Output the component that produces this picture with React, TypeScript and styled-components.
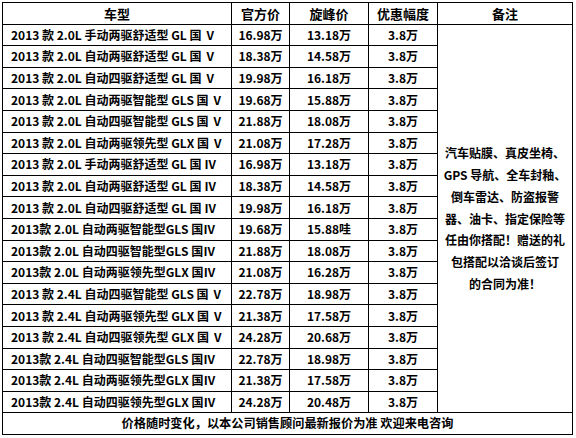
import styled, { createGlobalStyle } from "styled-components";

type CarRow = {
  model: string;
  official: string;
  sale: string;
  discount: string;
};

const rows: CarRow[] = [
  { model: "2013 款 2.0L 手动两驱舒适型 GL 国 Ⅴ", official: "16.98万", sale: "13.18万", discount: "3.8万" },
  { model: "2013 款 2.0L 自动两驱舒适型 GL 国 Ⅴ", official: "18.38万", sale: "14.58万", discount: "3.8万" },
  { model: "2013 款 2.0L 自动四驱舒适型 GL 国 Ⅴ", official: "19.98万", sale: "16.18万", discount: "3.8万" },
  { model: "2013 款 2.0L 自动两驱智能型 GLS 国 Ⅴ", official: "19.68万", sale: "15.88万", discount: "3.8万" },
  { model: "2013 款 2.0L 自动四驱智能型 GLS 国 Ⅴ", official: "21.88万", sale: "18.08万", discount: "3.8万" },
  { model: "2013 款 2.0L 自动两驱领先型 GLX 国 Ⅴ", official: "21.08万", sale: "17.28万", discount: "3.8万" },
  { model: "2013 款 2.0L 手动两驱舒适型 GL 国 Ⅳ", official: "16.98万", sale: "13.18万", discount: "3.8万" },
  { model: "2013 款 2.0L 自动两驱舒适型 GL 国 Ⅳ", official: "18.38万", sale: "14.58万", discount: "3.8万" },
  { model: "2013 款 2.0L 自动四驱舒适型 GL 国 Ⅳ", official: "19.98万", sale: "16.18万", discount: "3.8万" },
  { model: "2013款 2.0L 自动两驱智能型GLS 国Ⅳ", official: "19.68万", sale: "15.88哇", discount: "3.8万" },
  { model: "2013款 2.0L 自动四驱智能型GLS 国Ⅳ", official: "21.88万", sale: "18.08万", discount: "3.8万" },
  { model: "2013款 2.0L 自动两驱领先型GLX 国Ⅳ", official: "21.08万", sale: "16.28万", discount: "3.8万" },
  { model: "2013 款 2.4L 自动四驱智能型 GLS 国 Ⅴ", official: "22.78万", sale: "18.98万", discount: "3.8万" },
  { model: "2013 款 2.4L 自动两驱领先型 GLX 国 Ⅴ", official: "21.38万", sale: "17.58万", discount: "3.8万" },
  { model: "2013 款 2.4L 自动四驱领先型 GLX 国 Ⅴ", official: "24.28万", sale: "20.68万", discount: "3.8万" },
  { model: "2013款 2.4L 自动四驱智能型GLS 国Ⅳ", official: "22.78万", sale: "18.98万", discount: "3.8万" },
  { model: "2013款 2.4L 自动两驱领先型GLX 国Ⅳ", official: "21.38万", sale: "17.58万", discount: "3.8万" },
  { model: "2013款 2.4L 自动四驱领先型GLX 国Ⅳ", official: "24.28万", sale: "20.48万", discount: "3.8万" },
];

const noteLines = [
  "汽车贴膜、真皮坐椅、",
  "GPS 导航、全车封釉、",
  "倒车雷达、防盗报警",
  "器、油卡、指定保险等",
  "任由你搭配！赠送的礼",
  "包搭配以洽谈后签订",
  "的合同为准！",
];

const App = () => {
  return (
    <>
      <GlobalStyle />
      <PriceTable>
        <colgroup>
          <Col $width={229} />
          <Col $width={58} />
          <Col $width={79} />
          <Col $width={69} />
          <Col $width={135} />
        </colgroup>
        <thead>
          <tr>
            <HeadCell>车型</HeadCell>
            <HeadCell>官方价</HeadCell>
            <HeadCell>旋峰价</HeadCell>
            <HeadCell>优惠幅度</HeadCell>
            <HeadCell>备注</HeadCell>
          </tr>
        </thead>
        <tbody>
          {rows.map((row, i) => (
            <tr key={i}>
              <Cell $align="left">{row.model}</Cell>
              <Cell>{row.official}</Cell>
              <Cell>{row.sale}</Cell>
              <Cell>{row.discount}</Cell>
              {i === 0 && (
                <NoteCell rowSpan={rows.length}>
                  {noteLines.map((line) => (
                    <NoteLine key={line}>{line}</NoteLine>
                  ))}
                </NoteCell>
              )}
            </tr>
          ))}
        </tbody>
        <tfoot>
          <tr>
            <FootCell colSpan={5}>
              价格随时变化，以本公司销售顾问最新报价为准 欢迎来电咨询
            </FootCell>
          </tr>
        </tfoot>
      </PriceTable>
    </>
  );
};

export default App;

const GlobalStyle = createGlobalStyle`
  html, body {
    margin: 0;
    padding: 0;
    background: #ffffff;
  }
`;

const PriceTable = styled.table`
  margin: 2px 0 0 2px;
  width: 571px;
  height: 432px;
  table-layout: fixed;
  border-collapse: collapse;
  border: 1px solid #000;
  font-family: "Noto Sans CJK SC", "Noto Sans", sans-serif;
  font-size: 12px;
  font-weight: 700;
  color: #000;

  tr {
    height: 21.6px;
  }
`;

const Col = styled.col<{ $width: number }>`
  width: ${(p) => p.$width}px;
`;

const HeadCell = styled.th`
  border: 1px solid #000;
  padding: 0;
  font-size: 13px;
  text-align: center;
  line-height: 1;
`;

const Cell = styled.td<{ $align?: "left" | "center" }>`
  border: 1px solid #000;
  padding: ${(p) => (p.$align === "left" ? "0 0 0 8px" : "0")};
  text-align: ${(p) => p.$align ?? "center"};
  white-space: nowrap;
  overflow: hidden;
  line-height: 1;
`;

const NoteCell = styled.td`
  border: 1px solid #000;
  padding: 0;
  text-align: center;
  vertical-align: middle;
  font-size: 12px;
`;

const NoteLine = styled.div`
  line-height: 21.7px;
  white-space: nowrap;
`;

const FootCell = styled.td`
  border: 1px solid #000;
  padding: 0;
  text-align: center;
  font-size: 12.2px;
  line-height: 1;
`;
